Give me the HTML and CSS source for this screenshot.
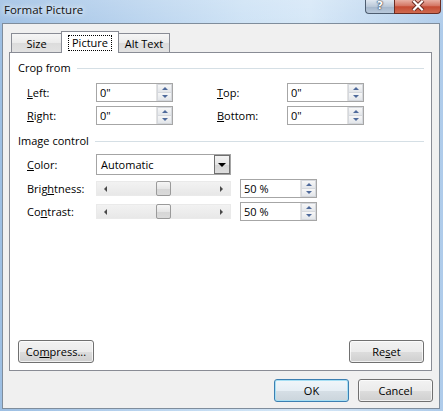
FILE: index.html
```html
<!DOCTYPE html>
<html>
<head>
<meta charset="utf-8">
<link rel="stylesheet" href="styles.css">
</head>
<body>
<div class="window">
  <div class="titlebar">
    <span class="title">Format Picture</span>
    <div class="caption">
      <div class="cap help"><span>?</span></div>
      <div class="cap close">
        <svg width="14" height="11" viewBox="0 0 14 11"><path d="M2 0.5 L12 10.5 M12 0.5 L2 10.5" stroke="#6b2a20" stroke-width="4" stroke-linecap="butt"/><path d="M2.3 0.8 L11.7 10.2 M11.7 0.8 L2.3 10.2" stroke="#fff" stroke-width="2.2"/></svg>
      </div>
    </div>
  </div>
  <div class="client">
    <div class="tabs">
      <div class="tab tab-size">Size</div>
      <div class="tab tab-picture active"><span class="focus">Picture</span></div>
      <div class="tab tab-alt">Alt Text</div>
    </div>
    <div class="panel">
      <div class="group-head"><span>Crop from</span><div class="rule"></div></div>
      <div class="crop-grid">
        <label><u>L</u>eft:</label>
        <div class="spin"><span class="val">0"</span><div class="spinner"><div class="up"></div><div class="down"></div></div></div>
        <div></div>
        <label><u>T</u>op:</label>
        <div class="spin"><span class="val">0"</span><div class="spinner"><div class="up"></div><div class="down"></div></div></div>
        <label><u>R</u>ight:</label>
        <div class="spin"><span class="val">0"</span><div class="spinner"><div class="up"></div><div class="down"></div></div></div>
        <div></div>
        <label><u>B</u>ottom:</label>
        <div class="spin"><span class="val">0"</span><div class="spinner"><div class="up"></div><div class="down"></div></div></div>
      </div>
      <div class="group-head head2"><span>Image control</span><div class="rule"></div></div>
      <div class="row color-row">
        <label><u>C</u>olor:</label>
        <div class="combo"><span class="val">Automatic</span><div class="drop"><div class="tri"></div></div></div>
      </div>
      <div class="row slider-row">
        <label>Brig<u>h</u>tness:</label>
        <div class="slider"><div class="arr-l"></div><div class="thumb"></div><div class="arr-r"></div></div>
        <div class="spin"><span class="val">50 %</span><div class="spinner"><div class="up"></div><div class="down"></div></div></div>
      </div>
      <div class="row slider-row second">
        <label>Co<u>n</u>trast:</label>
        <div class="slider"><div class="arr-l"></div><div class="thumb"></div><div class="arr-r"></div></div>
        <div class="spin"><span class="val">50 %</span><div class="spinner"><div class="up"></div><div class="down"></div></div></div>
      </div>
      <div class="panel-buttons">
        <div class="btn compress">Co<u>m</u>press...</div>
        <div class="btn reset">Re<u>s</u>et</div>
      </div>
    </div>
    <div class="footer">
      <div class="btn default">OK</div>
      <div class="btn">Cancel</div>
    </div>
  </div>
</div>
</body>
</html>
```
FILE: styles.css
```css
* { box-sizing: border-box; }
html, body { margin: 0; padding: 0; }
body {
  width: 443px; height: 411px; overflow: hidden;
  font-family: "Open Sans", "Liberation Sans", sans-serif;
  font-size: 11px; color: #000;
}
u { text-decoration: underline; text-underline-offset: 1px; }

.window {
  width: 443px; height: 411px;
  display: flex; flex-direction: column;
  padding: 0 3px 2px 2px;
  background:
    linear-gradient(to bottom, rgba(255,255,255,0.15), rgba(255,255,255,0) 30px),
    linear-gradient(to right, #9dbfe3 0%, #b3cfec 25%, #cde2f5 55%, #d5e7f7 70%, #bcd5ee 90%, #aecbea 100%);
}
.titlebar { height: 23px; display: flex; align-items: flex-start; flex: none; }
.title {
  padding: 2px 0 0 2px;
  font-size: 11.5px; color: #111;
  text-shadow: 0 0 5px rgba(255,255,255,0.95), 0 0 8px rgba(255,255,255,0.8);
}
.caption { margin-left: auto; margin-right: -1px; display: flex; }
.cap {
  height: 14px; display: flex; align-items: center; justify-content: center;
  border: 1px solid #4d5d70; border-top: none;
}
.help {
  width: 29px; border-radius: 0 0 0 4px;
  background: linear-gradient(to bottom, #dfe7f0, #bac8d8 50%, #a4b6cb 51%, #b9c9db);
  border-right: none;
}
.help span {
  font-family: "DejaVu Sans", sans-serif; font-size: 11px; font-weight: bold;
  color: #fff; line-height: 10px; margin-top: -2px;
  text-shadow: 0 0 1px #38475a, 0 0 1px #38475a, 0 0 2px #38475a;
}
.close {
  width: 47px; border-radius: 0 0 4px 0;
  background: linear-gradient(to bottom, #e8b0a4, #d47563 45%, #c54a33 52%, #cf6a4f 100%);
  border-color: #6b2c22;
}
.close svg { margin-top: -2px; }

.client {
  flex: 1;
  border: 1px solid #7f8d9c;
  background: #f0f0f0;
  display: flex; flex-direction: column;
}

.tabs {
  height: 21px; margin: 7px 0 0 8px;
  display: flex; align-items: flex-end;
}
.tab {
  height: 19px;
  border: 1px solid #898c95; border-bottom: none;
  background: linear-gradient(to bottom, #f6f6f6, #ebebeb 50%, #dcdcdc 51%, #e2e2e2);
  display: flex; align-items: center; justify-content: center;
  padding-top: 1px;
}
.tab-size { width: 51px; }
.tab-picture {
  width: 58px; height: 22px; margin-left: -1px; margin-bottom: -1px;
  background: #fff; position: relative; z-index: 2; padding-top: 0;
}
.tab-alt { width: 52px; margin-left: -1px; }
.focus { border: 1px dotted #000; padding: 0 3px; line-height: 14px; }

.panel {
  height: 319px;
  margin: 0 7px 0 6px;
  border: 1px solid #898c95;
  background: #fff;
  padding: 8px 7px 7px 8px;
  display: flex; flex-direction: column;
}
.group-head { height: 14px; display: flex; align-items: center; }
.group-head span { line-height: 14px; }
.rule { flex: 1; height: 1px; background: #d5dfe5; margin-left: 6px; }
.head2 { margin-top: 9px; }

.crop-grid {
  margin-top: 8px; padding-left: 9px;
  display: grid;
  grid-template-columns: 69px 77px 44px 70px 77px;
  grid-auto-rows: 19px; row-gap: 4px;
}
label { display: flex; align-items: center; }

.spin {
  height: 19px; width: 77px;
  border: 1px solid #a6a6a6;
  background: #fff;
  display: flex; align-items: center;
  padding-left: 3px;
}
.val { flex: 1; line-height: 15px; }
.spinner {
  width: 16px; height: 17px; margin-right: 0px;
  display: flex; flex-direction: column;
  border-left: 1px solid #e2e2e2;
}
.spinner .up, .spinner .down {
  flex: 1;
  border: 1px solid #d5d8dd;
  background: linear-gradient(to bottom, #f7f7f7, #e3e6ea);
  display: flex; align-items: center; justify-content: center;
}
.spinner .down { border-top: none; }
.spinner .up::before {
  content: ""; border-left: 3px solid transparent; border-right: 3px solid transparent;
  border-bottom: 3px solid #4f6a9b;
}
.spinner .down::before {
  content: ""; border-left: 3px solid transparent; border-right: 3px solid transparent;
  border-top: 3px solid #4f6a9b;
}

.row { display: flex; align-items: center; padding-left: 9px; }
.row label { width: 69px; height: 100%; }
.color-row { margin-top: 6px; height: 21px; }
.combo {
  width: 135px; height: 21px;
  border: 1px solid #a4a4a4; background: #fff;
  display: flex; align-items: center; padding-left: 4px;
}
.drop {
  width: 16px; height: 19px; margin-right: 0;
  border: 1px solid #6f6f6f;
  background: linear-gradient(to bottom, #f3f3f3, #e4e4e4 50%, #d4d4d4 51%, #dedede);
  display: flex; align-items: center; justify-content: center;
}
.tri { border-left: 4px solid transparent; border-right: 4px solid transparent; border-top: 4px solid #000; }

.slider-row { margin-top: 4px; height: 19px; }
.slider {
  width: 135px; height: 15px;
  background: linear-gradient(to bottom, #f2f2f2, #e8e8e8);
  border: 1px solid #eaeaea;
  display: flex; align-items: center;
  margin-right: 9px;
}
.arr-l { margin-left: 7px; border-top: 3px solid transparent; border-bottom: 3px solid transparent; border-right: 3px solid #4a4a4a; }
.arr-r { margin-left: auto; margin-right: 7px; border-top: 3px solid transparent; border-bottom: 3px solid transparent; border-left: 3px solid #4a4a4a; }
.thumb {
  width: 15px; height: 15px; margin-left: 49px;
  border: 1px solid #9a9a9a; border-radius: 2px;
  background: linear-gradient(to bottom, #f6f6f6, #e6e6e6 50%, #d6d6d6 51%, #dadada);
}

.panel-buttons { margin-top: auto; display: flex; justify-content: space-between; }
.btn {
  height: 23px; width: 75px;
  border: 1px solid #707070; border-radius: 3px;
  background: linear-gradient(to bottom, #f2f2f2, #ebebeb 50%, #dddddd 51%, #cfcfcf);
  box-shadow: inset 0 0 0 1px rgba(255,255,255,0.7);
  display: flex; align-items: center; justify-content: center;
}
.compress { width: 76px; }
.footer {
  display: flex; justify-content: flex-end; gap: 9px;
  margin: 8px 6px 0 0;
}
.btn.default {
  border-color: #3c7fb1;
  box-shadow: inset 0 0 0 1px #a6dff4;
  background: linear-gradient(to bottom, #f0f6fa, #e6eef4 50%, #d6dfe6 51%, #cbd5dc);
}
```
